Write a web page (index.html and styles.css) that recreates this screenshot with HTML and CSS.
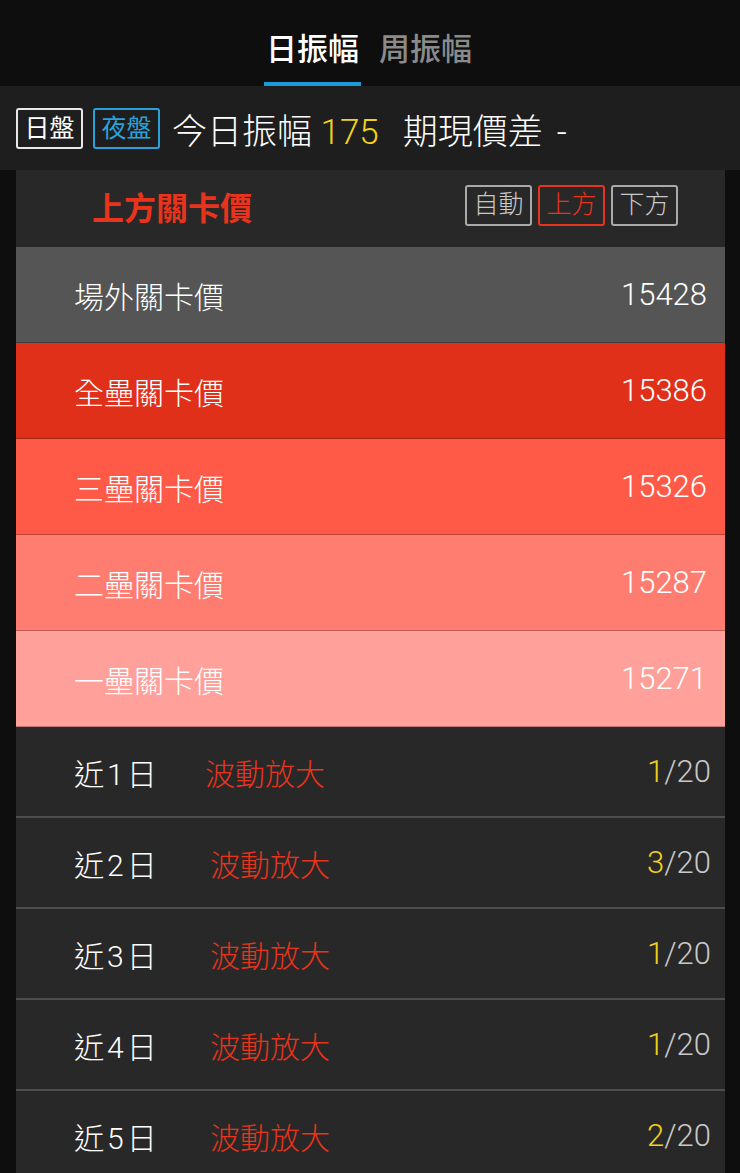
FILE: index.html
```html
<!DOCTYPE html>
<html lang="zh-Hant">
<head>
    <meta charset="UTF-8">
    <meta name="viewport" content="width=device-width, initial-scale=1.0">
    <title>日振幅</title>
    <link rel="stylesheet" href="styles.css">
</head>
<body>
    <div class="tabs">
        <div class="tab active">日振幅</div>
        <div class="tab">周振幅</div>
    </div>

    <div class="summary">
        <span class="box">日盤</span>
        <span class="box night">夜盤</span>
        <span class="info">今日振幅 <span class="yellow amp">175</span>期現價差<span class="dash">-</span></span>
    </div>

    <div class="panel">
        <div class="panel-head">
            <div class="title">上方關卡價</div>
            <div class="switch">
                <span class="btn">自動</span>
                <span class="btn on">上方</span>
                <span class="btn">下方</span>
            </div>
        </div>

        <!-- 關卡價 -->
        <div class="level lv0"><span>場外關卡價</span><span class="num">15428</span></div>
        <div class="level lv1"><span>全壘關卡價</span><span class="num">15386</span></div>
        <div class="level lv2"><span>三壘關卡價</span><span class="num">15326</span></div>
        <div class="level lv3"><span>二壘關卡價</span><span class="num">15287</span></div>
        <div class="level lv4"><span>一壘關卡價</span><span class="num">15271</span></div>

        <!-- 近幾日 -->
        <div class="day">
            <span class="day-name">近1日</span>
            <span class="day-state first">波動放大</span>
            <span class="count"><span class="yellow">1</span>/20</span>
        </div>
        <div class="day">
            <span class="day-name">近2日</span>
            <span class="day-state">波動放大</span>
            <span class="count"><span class="yellow">3</span>/20</span>
        </div>
        <div class="day">
            <span class="day-name">近3日</span>
            <span class="day-state">波動放大</span>
            <span class="count"><span class="yellow">1</span>/20</span>
        </div>
        <div class="day">
            <span class="day-name">近4日</span>
            <span class="day-state">波動放大</span>
            <span class="count"><span class="yellow">1</span>/20</span>
        </div>
        <div class="day">
            <span class="day-name">近5日</span>
            <span class="day-state">波動放大</span>
            <span class="count"><span class="yellow">2</span>/20</span>
        </div>
    </div>
</body>
</html>
```

FILE: styles.css
```css
body {
    margin: 0;
    background-color: #0e0e0e;
    color: #fff;
    font-family: Roboto, "Noto Sans CJK TC", sans-serif;
    overflow: hidden;
}

/* 上方分頁 */
.tabs {
    height: 86px;
    display: flex;
    justify-content: center;
    align-items: flex-end;
    gap: 16px;
    padding-right: 2px;
    box-sizing: border-box;
}

.tab {
    font-size: 31px;
    font-weight: 500;
    line-height: 1;
    color: #8a8a8a;
    padding: 0 2px 17px;
    border-bottom: 4px solid transparent;
}

.tab.active {
    color: #fff;
    border-bottom-color: #1a9ad6;
}

/* 日盤 / 夜盤 */
.summary {
    height: 84px;
    background-color: #1e1e1e;
    display: flex;
    align-items: center;
    padding-left: 16px;
    gap: 10px;
}

.box {
    width: 63px;
    height: 37px;
    border: 2px solid #e8e8e8;
    border-radius: 3px;
    font-size: 25px;
    line-height: 37px;
    text-align: center;
}

.box.night {
    color: #27a2dd;
    border-color: #27a2dd;
}

.info {
    font-size: 35px;
    margin-left: 2px;
    font-weight: 300;
}

.amp {
    margin-right: 24px;
}

.dash {
    margin-left: 14px;
}

.yellow {
    color: #f2d21c;
}

.panel {
    margin: 0 15px 0 16px;
    background-color: #282828;
}

.panel-head {
    height: 71px;
    display: flex;
    align-items: center;
    justify-content: space-between;
    padding: 0 47px 6px 76px;
}

.title {
    color: #e8341c;
    font-size: 32px;
    font-weight: 700;
}

.switch {
    display: flex;
    gap: 6px;
}

.btn {
    width: 63px;
    height: 37px;
    border: 2px solid #aaa;
    border-radius: 3px;
    font-size: 25px;
    line-height: 36px;
    text-align: center;
    color: #c8c8c8;
    font-weight: 300;
}

.btn.on {
    color: #e8341c;
    border-color: #e8341c;
}

.level {
    height: 95px;
    display: flex;
    align-items: center;
    justify-content: space-between;
    padding: 0 18px 0 58px;
    font-size: 30px;
    font-weight: 300;
    border-bottom: 1px solid rgba(0, 0, 0, 0.25);
}

.level .num {
    font-size: 31px;
}

.lv0 { background-color: #555555; }
.lv1 { background-color: #e0301a; }
.lv2 { background-color: #ff5a47; }
.lv3 { background-color: #ff7d70; }
.lv4 { background-color: #ffa09b; }

.day {
    height: 89px;
    display: flex;
    align-items: center;
    padding: 0 14px 0 58px;
    font-size: 30px;
    font-weight: 300;
    border-bottom: 2px solid #4d4d4d;
}

.day-name {
    width: 136px;
    letter-spacing: 3px;
}

.day-state {
    color: #e8341c;
}

.day-state.first {
    margin-left: -5px;
}

.count {
    margin-left: auto;
    color: #c8c8c8;
    font-size: 31px;
}
```
